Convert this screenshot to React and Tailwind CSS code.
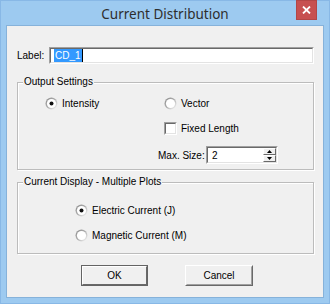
import React from "react";

const font = { fontFamily: '"Liberation Sans", Arial, sans-serif' };

function Radio({ checked }) {
  return (
    <svg width="13" height="13" viewBox="0 0 13 13" className="shrink-0">
      <defs>
        <linearGradient id="rg" x1="0" y1="0" x2="1" y2="1">
          <stop offset="0" stopColor="#8a8a8a" />
          <stop offset="0.5" stopColor="#b0b0b0" />
          <stop offset="1" stopColor="#ffffff" />
        </linearGradient>
      </defs>
      <circle cx="6.5" cy="6.5" r="6" fill="url(#rg)" />
      <circle cx="6.5" cy="6.5" r="4.6" fill="#ffffff" />
      {checked && <circle cx="6.5" cy="6.5" r="2" fill="#111" />}
    </svg>
  );
}

function Check() {
  return (
    <div className="w-[13px] h-[13px] shrink-0 border border-t-[#a0a0a0] border-l-[#a0a0a0] border-b-white border-r-white">
      <div className="w-full h-full bg-white border border-t-[#696969] border-l-[#696969] border-b-[#e3e3e3] border-r-[#e3e3e3]" />
    </div>
  );
}

function Group({ title, className, children }) {
  return (
    <div
      className={`relative border border-[#bcbcbc] shadow-[inset_1px_1px_0_#ffffff,1px_1px_0_#ffffff] ${className}`}
    >
      <span className="absolute left-[5px] top-[-7px] bg-[#f0f0f0] px-[1px] text-[10px] leading-[12px] text-black">
        {title}
      </span>
      {children}
    </div>
  );
}

function Button({ label, isDefault }) {
  return (
    <div
      className={`h-[21px] border ${
        isDefault ? "border-[#646464] w-[67px]" : "border-t-white border-l-white border-b-[#696969] border-r-[#696969] w-[68px]"
      }`}
    >
      <div
        className={`h-full flex items-center justify-center bg-[#f0f0f0] border ${
          isDefault
            ? "border-t-white border-l-white border-b-[#696969] border-r-[#696969]"
            : "border-t-[#f0f0f0] border-l-[#f0f0f0] border-b-[#a0a0a0] border-r-[#a0a0a0]"
        }`}
      >
        <span className="text-[10px] text-black">{label}</span>
      </div>
    </div>
  );
}

export default function App() {
  return (
    <div
      className="w-[330px] h-[304px] bg-[#9dcaf0] border border-[#88b8e6] flex flex-col"
      style={font}
    >
      <div className="relative h-[24px] flex items-center justify-center">
        <span
          className="text-[13.5px] text-[#2e2e2e] mt-[2px]"
          style={{ fontFamily: '"Noto Sans", "Open Sans", sans-serif' }}
        >
          Current Distribution
        </span>
        <div className="absolute right-[12px] top-[-1px] w-[21px] h-[20px] bg-[#c75050] border border-[#b34646] flex items-center justify-center">
          <svg width="9" height="8" viewBox="0 0 9 8">
            <path d="M1 0.5 L8 7.5 M8 0.5 L1 7.5" stroke="#fff" strokeWidth="1.8" />
          </svg>
        </div>
      </div>

      <div className="ml-[5px] w-[318px] h-[273px] border border-[#86b2da] bg-[#f0f0f0] pl-[10px] flex flex-col">
        <div className="mt-[21px] flex items-center h-[17px]">
          <span className="text-[10px] text-black w-[32px]">Label:</span>
          <div className="w-[265px] h-[17px] border border-t-[#a0a0a0] border-l-[#a0a0a0] border-b-white border-r-white">
            <div className="h-full bg-white border border-t-[#696969] border-l-[#696969] border-b-[#e3e3e3] border-r-[#e3e3e3] flex items-center pl-[3px]">
              <span className="bg-[#3399ff] text-white text-[10px] leading-[13px] px-[1px]">CD_1</span>
              <span className="w-px h-[13px] bg-black" />
            </div>
          </div>
        </div>

        <Group title="Output Settings" className="mt-[18px] w-[297px] h-[88px] pt-[13px]">
          <div className="h-[14px] flex items-center">
            <div className="w-[146px] pl-[27px] flex items-center gap-[4px]">
              <Radio checked />
              <span className="text-[10px] text-black">Intensity</span>
            </div>
            <div className="flex items-center gap-[4px]">
              <Radio />
              <span className="text-[10px] text-black">Vector</span>
            </div>
          </div>
          <div className="mt-[11px] h-[14px] pl-[146px] flex items-center gap-[4px]">
            <Check />
            <span className="text-[10px] text-black">Fixed Length</span>
          </div>
          <div className="mt-[11px] h-[18px] pl-[140px] flex items-center">
            <span className="w-[48px] text-[10px] text-black">Max. Size:</span>
            <div className="w-[72px] h-[18px] border border-t-[#a0a0a0] border-l-[#a0a0a0] border-b-white border-r-white">
              <div className="h-full bg-white border border-t-[#696969] border-l-[#696969] border-b-[#e3e3e3] border-r-[#e3e3e3] flex items-center">
                <span className="flex-1 pl-[4px] text-[10px] text-black">2</span>
                <div className="w-[13px] h-full flex flex-col">
                  {[0, 1].map((i) => (
                    <div
                      key={i}
                      className="flex-1 bg-[#f0f0f0] border border-t-white border-l-white border-b-[#696969] border-r-[#696969] flex items-center justify-center"
                    >
                      <svg width="5" height="3" viewBox="0 0 5 3">
                        <path d={i === 0 ? "M2.5 0 L5 3 L0 3 Z" : "M0 0 L5 0 L2.5 3 Z"} fill="#000" />
                      </svg>
                    </div>
                  ))}
                </div>
              </div>
            </div>
          </div>
        </Group>

        <Group title="Current Display - Multiple Plots" className="mt-[12px] w-[297px] h-[72px] pt-[20px] pl-[57px]">
          <div className="h-[14px] flex items-center gap-[4px]">
            <Radio checked />
            <span className="text-[10px] text-black">Electric Current (J)</span>
          </div>
          <div className="mt-[11px] h-[14px] flex items-center gap-[4px]">
            <Radio />
            <span className="text-[10px] text-black">Magnetic Current (M)</span>
          </div>
        </Group>

        <div className="mt-[11px] ml-[64px] flex gap-[37px]">
          <Button label="OK" isDefault />
          <Button label="Cancel" />
        </div>
      </div>
    </div>
  );
}
